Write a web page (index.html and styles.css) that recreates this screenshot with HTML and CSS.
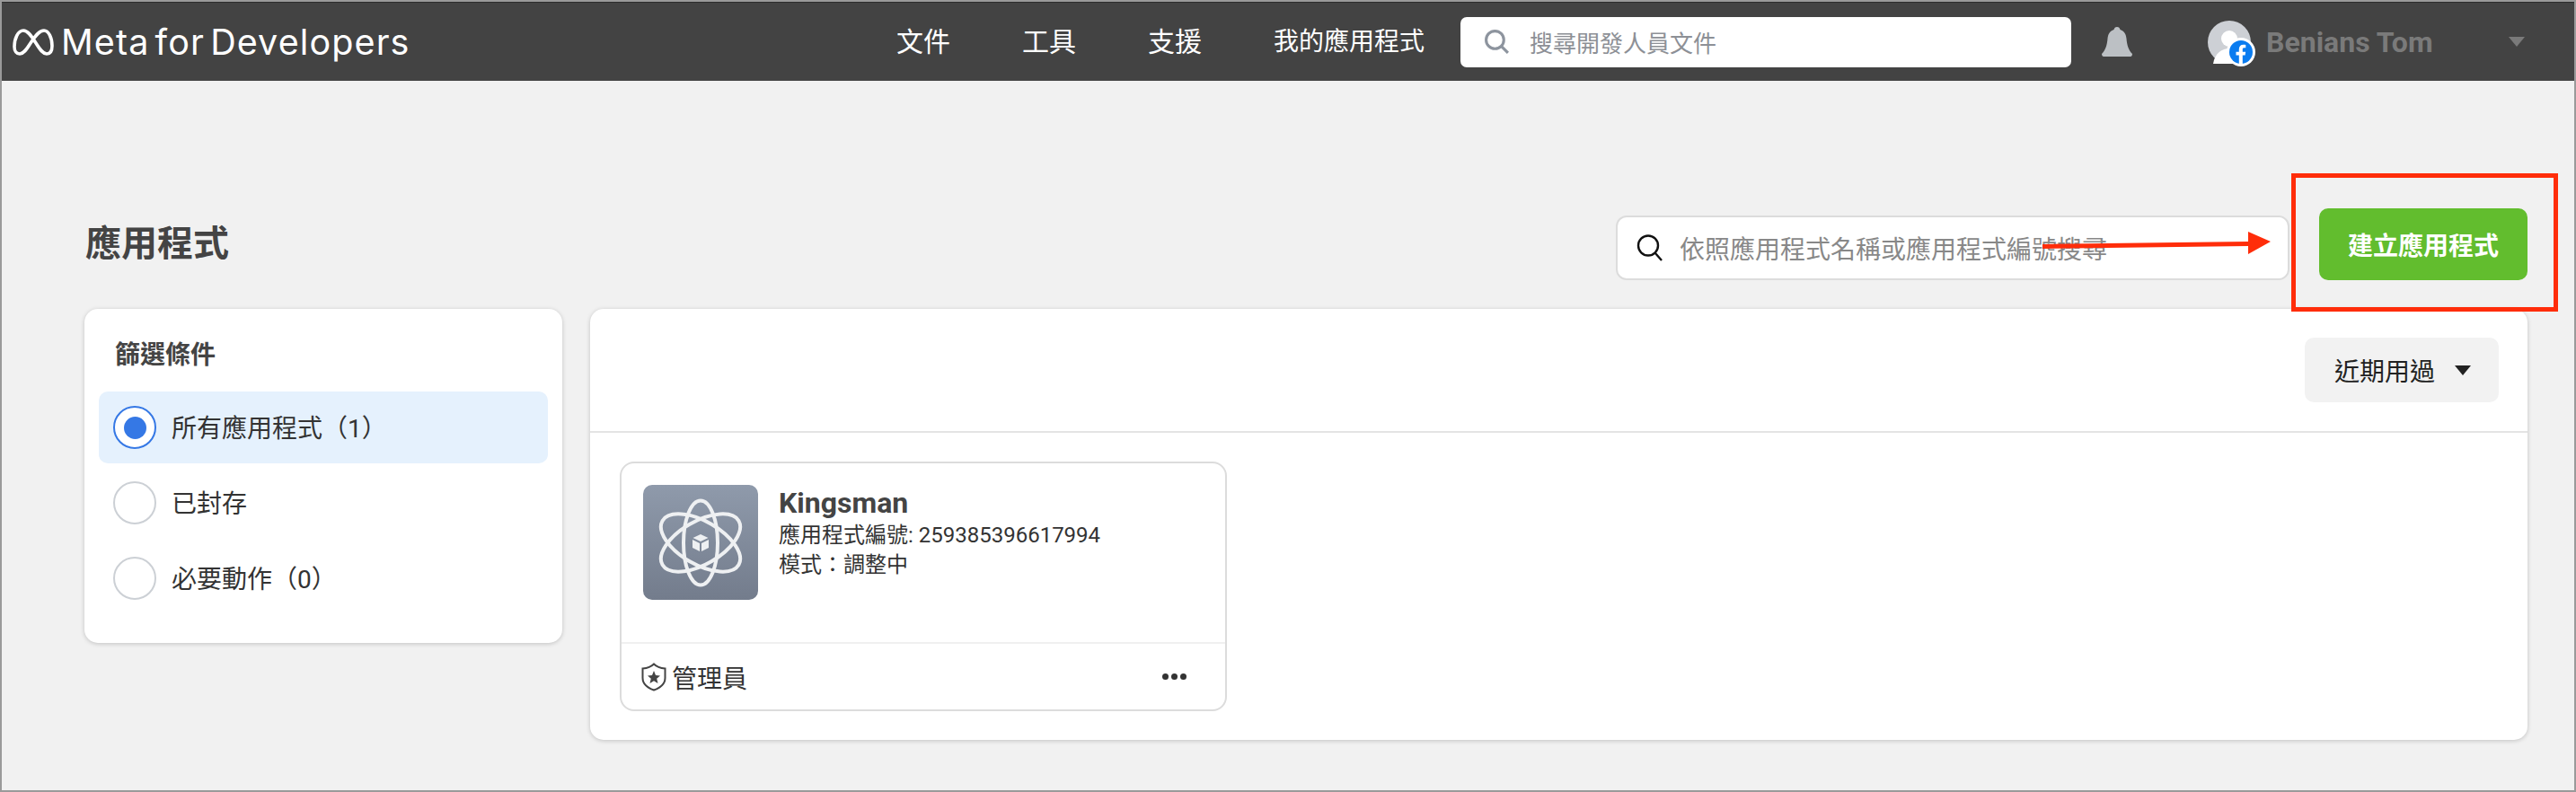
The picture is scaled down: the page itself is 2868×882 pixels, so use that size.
FILE: index.html
```html
<!DOCTYPE html>
<html lang="zh-Hant">
<head>
<meta charset="utf-8">
<title>Meta for Developers</title>
<link rel="stylesheet" href="styles.css">
</head>
<body>
<div class="page">
  <header class="topbar">
    <a class="brand">
      <svg class="brand-mark" viewBox="0 0 46 30"><path d="M12 2 C6 2 2 11 2 20 C2 25 4.5 28 8 28 C12 28 15 24 20 16 C26 7 30 2 35 2 C40 2 44 10 44 19 C44 25 41.5 28 38 28 C34 28 31 24 26 16 C21 8 17 2 12 2 Z"/></svg>
      <span class="brand-text">Meta for Developers</span>
    </a>
    <nav class="nav">
      <a>文件</a><a>工具</a><a>支援</a><a class="nav-apps">我的應用程式</a>
    </nav>
    <div class="top-search">
      <svg class="top-search-icon" viewBox="0 0 28 28"><circle cx="12" cy="12" r="9.5"/><path d="M19 19 L26 26"/></svg>
      <span>搜尋開發人員文件</span>
    </div>
    <svg class="bell" viewBox="0 0 34 34"><path d="M17 0 C19 0 20 1 20.5 3 C25 4.500 27 8 27.500 13 C28 20 30 26 34 30 C34 32 33 33 32 33 L2 33 C1 33 0 32 0 30 C4 26 6 20 6.500 13 C7 8 9 4.500 13.500 3 C14 1 15 0 17 0 Z"/></svg>
    <div class="avatar">
      <svg class="avatar-img" viewBox="0 0 48 48"><circle cx="24" cy="24" r="24" fill="#cdd0d5"/><circle cx="24" cy="20" r="9" fill="#fff"/><path d="M6 48 C8 36 16 31 24 31 C32 31 40 36 42 48 Z" fill="#fff"/></svg>
      <svg class="avatar-badge" viewBox="0 0 32 32"><circle cx="16" cy="16" r="16" fill="#fff"/><circle cx="16" cy="16" r="13" fill="#0a7cf0"/><path d="M13.800 29 L13.800 19.500 L10.500 19.500 L10.500 15.700 L13.800 15.700 L13.800 12.800 C13.800 9.500 15.700 7.700 18.700 7.700 C20.100 7.700 21.300 7.900 21.300 7.900 L21.300 11.200 L19.600 11.200 C18 11.200 17.800 12.100 17.800 13 L17.800 15.700 L21.200 15.700 L20.600 19.500 L17.800 19.500 L17.800 29 Z" fill="#fff"/></svg>
    </div>
    <span class="user-name">Benians Tom</span>
    <span class="user-caret"></span>
  </header>

  <main class="content">
    <div class="title-row">
      <h1>應用程式</h1>
      <div class="app-search">
        <svg class="app-search-icon" viewBox="0 0 31 30"><circle cx="13" cy="12.500" r="11"/><path d="M21 21 L28 29"/></svg>
        <span>依照應用程式名稱或應用程式編號搜尋</span>
      </div>
      <button class="create">建立應用程式</button>
    </div>
    <div class="columns">
      <aside class="filters">
        <h2>篩選條件</h2>
        <div class="filter on"><span class="radio"></span><span class="filter-label">所有應用程式（1）</span></div>
        <div class="filter"><span class="radio"></span><span class="filter-label">已封存</span></div>
        <div class="filter"><span class="radio"></span><span class="filter-label">必要動作（0）</span></div>
      </aside>
      <section class="apps">
        <div class="apps-head">
          <button class="sort">近期用過<span class="sort-caret"></span></button>
        </div>
        <div class="apps-body">
          <article class="app-card">
            <div class="app-main">
              <div class="app-icon">
                <svg viewBox="0 0 128 128">
                  <g fill="none" stroke="#eef0f2" stroke-width="4">
                    <ellipse cx="64" cy="64.500" rx="19" ry="47"/>
                    <ellipse cx="64" cy="64.500" rx="24" ry="49" transform="rotate(60 64 64.500)"/>
                    <ellipse cx="64" cy="64.500" rx="24" ry="49" transform="rotate(-60 64 64.500)"/>
                  </g>
                  <path d="M64 55 L72.500 59 L64 63 L55.500 59 Z" fill="#eef0f2"/>
                  <path d="M55 61 L63 65 L63 74 L55 70 Z M73 61 L65 65 L65 74 L73 70 Z" fill="#eef0f2"/>
                </svg>
              </div>
              <div class="app-info">
                <h3>Kingsman</h3>
                <p>應用程式編號: 259385396617994</p>
                <p>模式：調整中</p>
              </div>
            </div>
            <div class="app-foot">
              <svg class="shield" viewBox="0 0 28 32"><path d="M14 1.500 C17 4.500 21 6 26.500 6.500 L26.500 17 C26.500 23.500 21 28 14 30.500 C7 28 1.500 23.500 1.500 17 L1.500 6.500 C7 6 11 4.500 14 1.500 Z" fill="none" stroke="#444" stroke-width="2"/><path d="M14 9 L16 14 L21 14.500 L17.200 17.800 L18.500 23 L14 20.200 L9.500 23 L10.800 17.800 L7 14.500 L12 14 Z" fill="#444"/></svg>
              <span class="role">管理員</span>
              <span class="dots"><i></i><i></i><i></i></span>
            </div>
          </article>
        </div>
      </section>
    </div>
  </main>

  <div class="callout"></div>
  <svg class="arrow" viewBox="0 0 260 30"><path d="M0 16 L229 13 L229 2 L254 13 L229 27 L229 18 L0 21 Z"/></svg>
</div>
</body>
</html>
```
FILE: styles.css
```css
* { box-sizing: border-box; }
html, body { margin: 0; padding: 0; }
body { width: 2868px; height: 882px; overflow: hidden; background: #f1f1f1; font-family: Roboto, "Noto Sans CJK TC", sans-serif; color: #333; }
h1, h2, h3, p { margin: 0; }
button { font: inherit; border: 0; padding: 0; }

.page { position: relative; width: 2868px; height: 882px; border: 2px solid #9a9a9a; overflow: hidden; }

.topbar { display: flex; align-items: center; height: 88px; background: #434343; border-top: 1px solid #2c2c2c; }
.brand { display: flex; align-items: center; margin-left: 12px; width: 984px; flex: none; }
.brand-mark { width: 46px; height: 30px; fill: none; stroke: #fff; stroke-width: 3.6; flex: none; }
.brand-text { margin-left: 8px; font-family: Inter, sans-serif; font-size: 39.5px; letter-spacing: 1.1px; word-spacing: -6px; color: #fff; white-space: nowrap; }
.nav { display: flex; align-items: center; gap: 80px; height: 44px; font-size: 30px; line-height: 44px; color: #fff; flex: none; width: 628px; }
.nav a { white-space: nowrap; }
.nav .nav-apps { font-size: 28px; }
.top-search { display: flex; align-items: center; width: 680px; height: 56px; background: #fff; border-radius: 7px; padding-left: 26px; color: #8d9096; font-size: 26px; flex: none; }
.top-search-icon { width: 29px; height: 29px; fill: none; stroke: #8d949e; stroke-width: 3; margin-right: 22px; }
.bell { width: 34px; height: 34px; fill: #bcc0c4; margin-left: 34px; flex: none; }
.avatar { position: relative; width: 48px; height: 48px; margin-left: 84px; flex: none; }
.avatar-img { display: block; width: 48px; height: 48px; }
.avatar-badge { position: absolute; left: 21px; top: 19px; width: 32px; height: 32px; }
.user-name { margin-left: 17px; font-size: 32px; font-weight: 700; color: #7a7a7a; white-space: nowrap; width: 270px; flex: none; }
.user-caret { width: 0; height: 0; border: solid transparent; border-width: 11px 9.500px 0; border-top-color: #7a7a7a; flex: none; }

.content { padding: 0 52px 0 92px; }
.title-row { display: flex; align-items: flex-start; height: 254px; padding-top: 142px; }
.title-row h1 { flex: 1; font-size: 40px; line-height: 80px; font-weight: 700; color: #444; padding-left: 1px; }
.app-search { display: flex; align-items: center; width: 750px; height: 72px; margin-top: 8px; background: #fff; border: 2px solid #dcdcdc; border-radius: 12px; padding-left: 21px; font-size: 28px; color: #888; }
.app-search-icon { width: 31px; height: 30px; fill: none; stroke: #111; stroke-width: 2.400; margin-right: 17px; flex: none; }
.create { width: 232px; height: 80px; margin-left: 33px; background: #62bd2e; color: #fff; border-radius: 10px; font-size: 28px; font-weight: 700; }

.columns { display: flex; align-items: flex-start; gap: 31px; }
.filters { width: 532px; height: 372px; background: #fff; border-radius: 15px; box-shadow: 0 1px 5px rgba(0,0,0,.2); padding: 32px 16px 0; }
.filters h2 { font-size: 28px; line-height: 40px; font-weight: 700; color: #444; padding-left: 18px; margin-bottom: 20px; }
.filter { display: flex; align-items: center; height: 80px; margin-bottom: 4px; padding-left: 16px; font-size: 28px; color: #333; border-radius: 10px; }
.filter.on { background: #e5f1fd; }
.filter-label { margin-top: -3px; }
.radio { width: 48px; height: 48px; border-radius: 50%; border: 2px solid #ccd0d5; background: #fff; margin-right: 17px; flex: none; display: flex; align-items: center; justify-content: center; }
.on .radio { border-color: #3578e5; }
.on .radio::after { content: ""; width: 25px; height: 25px; border-radius: 50%; background: #3578e5; }

.apps { width: 2157px; height: 480px; background: #fff; border-radius: 15px; box-shadow: 0 1px 5px rgba(0,0,0,.2); }
.apps-head { display: flex; justify-content: flex-end; align-items: center; height: 138px; border-bottom: 2px solid #e4e4e4; padding-right: 32px; }
.sort { display: flex; align-items: center; width: 216px; height: 72px; padding-left: 33px; background: #f2f2f2; border-radius: 10px; font-size: 28px; color: #222; }
.sort-caret { width: 0; height: 0; border: solid transparent; border-width: 11px 9.500px 0; border-top-color: #222; margin-left: 22px; }
.apps-body { padding: 32px 33px 0; }
.app-card { width: 676px; height: 278px; border: 2px solid #dcdcdc; border-radius: 16px; background: #fff; }
.app-main { display: flex; height: 201px; border-bottom: 2px solid #f0f0f0; padding: 24px 0 0 24px; }
.app-icon { width: 128px; height: 128px; border-radius: 10px; background: linear-gradient(#8f9aab, #737c8c); flex: none; }
.app-icon svg { display: block; width: 128px; height: 128px; }
.app-info { margin-left: 23px; padding-top: 1px; }
.app-info h3 { font-size: 32px; line-height: 39px; font-weight: 700; color: #444; }
.app-info p { font-size: 24px; line-height: 33px; color: #333; }
.app-foot { display: flex; align-items: center; height: 73px; padding: 0 43px 0 22px; }
.shield { width: 28px; height: 32px; flex: none; margin-right: 6px; }
.role { font-size: 28px; color: #333; flex: 1; }
.dots { display: flex; gap: 3px; }
.dots i { width: 7px; height: 7px; border-radius: 50%; background: #333; }

.callout { position: absolute; left: 2549px; top: 191px; width: 297px; height: 154px; border: 5px solid #ff2d0a; }
.arrow { position: absolute; left: 2272px; top: 254px; width: 260px; height: 30px; fill: #ff2d0a; }
```
